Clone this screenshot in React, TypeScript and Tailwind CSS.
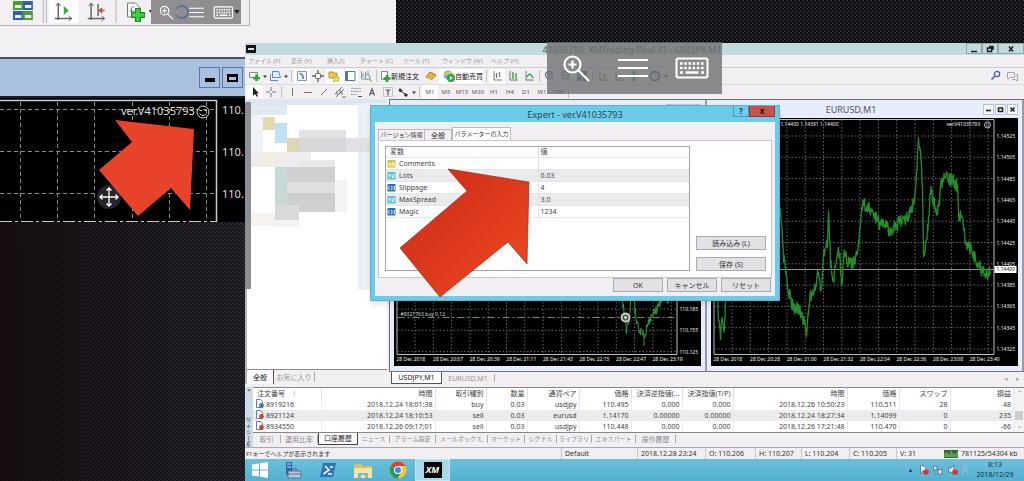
import { clsx } from "clsx";
import type { ReactNode } from "react";

const menus = [
  { label: "ファイル (F)", width: "w-[43px]" },
  { label: "表示 (V)", width: "w-[36px]" },
  { label: "挿入(I)", width: "w-[33px]" },
  { label: "チャート (C)", width: "w-[43px]" },
  { label: "ツール (T)", width: "w-[39px]" },
  { label: "ウィンドウ (W)", width: "w-[49px]" },
  { label: "ヘルプ (H)", width: "w-[40px]" },
];

const timeframes = ["M1", "M5", "M15", "M30", "H1", "H4", "D1", "W1", "MN"];

const params = [
  { name: "Comments", value: "", kind: "ab", color: "#d9c33a" },
  { name: "Lots", value: "0.03", kind: "½", color: "#5cc3d6" },
  { name: "Slippage", value: "4", kind: "123", color: "#2f6fc0" },
  { name: "MaxSpread", value: "3.0", kind: "½", color: "#5cc3d6" },
  { name: "Magic", value: "1234", kind: "123", color: "#2f6fc0" },
];

const columns = [
  { label: "注文番号", width: "w-[68px]" },
  { label: "時間", width: "w-[114px]" },
  { label: "取引種別", width: "w-[51px]" },
  { label: "数量", width: "w-[41px]" },
  { label: "通貨ペア", width: "w-[52px]" },
  { label: "価格", width: "w-[52px]" },
  { label: "決済逆指値(...", width: "w-[51px]" },
  { label: "決済指値(T/P)", width: "w-[51px]" },
  { label: "時間", width: "w-[114px]" },
  { label: "価格", width: "w-[52px]" },
  { label: "スワップ", width: "w-[51px]" },
  { label: "損益", width: "" },
];

const orders = [
  ["8919216", "2018.12.24 18:01:38", "buy", "0.03", "usdjpy", "110.495", "0.000", "0.000", "2018.12.26 10:50:23", "110.511", "28", "48"],
  ["8921124", "2018.12.24 18:10:53", "sell", "0.03", "eurusd", "1.14170", "0.00000", "0.00000", "2018.12.24 18:27:34", "1.14099", "0", "235"],
  ["8934550", "2018.12.26 09:17:01", "sell", "0.03", "usdjpy", "110.448", "0.000", "0.000", "2018.12.26 17:21:48", "110.470", "0", "-66"],
];

const terminalTabs = [
  { label: "取引", style: "w-[28px] text-[7px]" },
  { label: "運用比率", style: "w-[37px] text-[7px]" },
  { label: "口座履歴", style: "w-[40px] text-[7px]" },
  { label: "ニュース", style: "w-[32px] text-[6px]" },
  { label: "アラーム設定", style: "w-[46px] text-[6px]" },
  { label: "メールボックス", style: "w-[52px] text-[6px]" },
  { label: "マーケット", style: "w-[37px] text-[6px]" },
  { label: "シグナル", style: "w-[32px] text-[6px]" },
  { label: "ライブラリ", style: "w-[35px] text-[6px]" },
  { label: "エキスパート", style: "w-[44px] text-[6px]" },
  { label: "操作履歴", style: "w-[40px] text-[7px]" },
];

const quotes = [
  { label: "Default", width: "w-[76px]" },
  { label: "2018.12.28 23:24", width: "w-[68px]" },
  { label: "O: 110.206", width: "w-[50px]" },
  { label: "H: 110.207", width: "w-[46px]" },
  { label: "L: 110.204", width: "w-[48px]" },
  { label: "C: 110.205", width: "w-[47px]" },
  { label: "V: 31", width: "w-[48px]" },
];

type Point = [number, number];

const eurusdA: Point[] = [[6, 178], [7, 200], [9, 218], [11, 200], [13, 212], [14, 178]];
const eurusdB: Point[] = [
  [68, 90], [70, 104],
  [72, 140], [76, 168], [81, 189], [89, 192], [95, 213], [99, 178], [104, 171], [106, 156],
  [110, 172], [112, 136], [116, 124], [117, 92], [119, 146], [122, 163], [126, 130], [128, 134],
  [130, 166], [133, 132], [137, 146], [142, 145], [147, 126], [151, 86], [159, 92], [169, 106],
  [179, 112], [189, 104], [198, 98], [204, 78], [207, 20], [209, 34], [211, 66], [212, 145],
  [216, 112], [219, 72], [226, 96], [230, 66], [234, 60], [241, 62], [246, 68], [247, 96],
  [251, 98], [254, 122], [262, 138], [269, 150], [276, 158], [279, 154],
];

const usdjpyA: Point[] = [[228, 182], [230, 198], [232, 213], [235, 202], [236, 182]];
const usdjpyB: Point[] = [
  [240, 186], [242, 204], [246, 214], [250, 218], [254, 206], [258, 194], [262, 192], [265, 186], [270, 178], [274, 182], [276, 168],
];

// small repeatable jitter so the candles look ragged
function jitter(i: number) {
  const n = Math.sin(i * 12.9898) * 43758.5453;
  return n - Math.floor(n);
}

function ragged(points: Point[], amp: number) {
  const out: string[] = [];
  for (let p = 0; p < points.length - 1; p++) {
    const [x0, y0] = points[p];
    const [x1, y1] = points[p + 1];
    const steps = Math.max(2, Math.round((x1 - x0) * 2));
    for (let s = 0; s < steps; s++) {
      const t = s / steps;
      const off = (jitter(p * 31 + s) - 0.5) * amp;
      out.push(`${(x0 + (x1 - x0) * t).toFixed(1)},${(y0 + (y1 - y0) * t + off).toFixed(1)}`);
    }
  }
  const last = points[points.length - 1];
  out.push(`${last[0]},${last[1]}`);
  return out.join(" ");
}

function ChartFrame({ rows, times, firstRow, children }: {
  rows: string[];
  times: string[];
  firstRow: number;
  children: ReactNode;
}) {
  return (
    <svg viewBox="0 0 306 248" className="block w-full h-[248px] bg-black" fontFamily="Noto Sans, sans-serif">
      <g stroke="#8b8b8b" strokeWidth="1" strokeDasharray="1.5 2" opacity="0.75">
        {Array.from({ length: 15 }, (_, i) => (
          <line key={i} x1={20.5 + i * 18.3} x2={20.5 + i * 18.3} y1="2" y2="236" />
        ))}
        {rows.map((row, i) => (
          <line key={row} x1="3" x2="282" y1={firstRow + i * 21.3} y2={firstRow + i * 21.3} />
        ))}
      </g>
      <path d="M2.500 236V1.500H282.500V236.500H2.500" fill="none" stroke="#bdbdbd" />
      <g fill="#f1f1f1" fontSize="5">
        {rows.map((row, i) => (
          <text key={row} x="285" y={firstRow + 2 + i * 21.3}>{row}</text>
        ))}
        {times.map((time, i) => (
          <text key={time} x={2 + i * 36.6} y="243">{time}</text>
        ))}
      </g>
      {children}
    </svg>
  );
}

function WindowButtons() {
  return (
    <div className="flex gap-px">
      {["minimize", "maximize", "close"].map((action) => (
        <button
          key={action}
          type="button"
          aria-label={action}
          className="w-[11px] h-[11px] flex items-center justify-center border border-[#b9c1d3] bg-[#f4f6fc]"
        >
          <svg viewBox="0 0 7 7" className="w-[7px] h-[7px]" fill="none" stroke="#222" strokeWidth="1.6">
            {action === "minimize" && <path d="M1 4.500H6" />}
            {action === "maximize" && <path d="M1.500 2H5.500V5.500H1.500Z" />}
            {action === "close" && <path d="M1.500 1.500L5.500 5.500M5.500 1.500L1.500 5.500" />}
          </svg>
        </button>
      ))}
    </div>
  );
}

function ZoomIcon({ className }: { className: string }) {
  return (
    <svg viewBox="0 0 28 28" className={className} fill="none" stroke="#fff" strokeWidth="2.2">
      <circle cx="10.500" cy="10.500" r="8" />
      <path d="M16 16L27 27M6.500 10.500H14.500M10.500 6.500V14.500" />
    </svg>
  );
}

function KeyboardIcon({ className }: { className: string }) {
  return (
    <svg viewBox="0 0 34 22" className={className} fill="none" stroke="#fff">
      <rect x="1.500" y="1.500" width="31" height="19" rx="2" strokeWidth="2" />
      <path d="M5 6.500H29M5 11H29" strokeWidth="2.600" strokeDasharray="2.600 1.600" />
      <path d="M5 15.500H8M10.500 15.500H23.500M26 15.500H29" strokeWidth="2.600" />
    </svg>
  );
}

function LinesIcon({ className }: { className: string }) {
  return (
    <svg viewBox="0 0 30 20" className={className} stroke="#fff" strokeWidth="2.200">
      <path d="M0 2H30M0 10H30M0 18H30" />
    </svg>
  );
}

function Tool({ children, on, wide }: { children: ReactNode; on?: boolean; wide?: boolean }) {
  return (
    <span className={clsx("flex shrink-0 h-[15px] items-center justify-center", wide ? "w-[21px]" : "w-4", on && "bg-white")}>
      <svg viewBox={wide ? "0 0 19 12" : "0 0 12 12"} className={clsx("h-3", wide ? "w-[19px]" : "w-3")} fill="none">
        {children}
        {wide && <path d="M15 5.500H19L17 8Z" fill="#333" />}
      </svg>
    </span>
  );
}

function Divider() {
  return <span className="shrink-0 w-px h-3 mx-[2px] bg-[#c4c2c6]" />;
}

function AxisTool({ color, d, on }: { color: string; d: string; on?: boolean }) {
  return (
    <Tool on={on}>
      <path d="M3 1V10H11" stroke="#77777c" />
      <path d={d} stroke={color} strokeWidth="1.300" />
    </Tool>
  );
}

function BackWindow() {
  return (
    <div className="absolute left-0 top-0 w-[396px] h-[222px]">
      <div className="h-[57px] bg-[#f2f0f3]">
        <div className="relative flex items-center w-[250px] h-[26px] border-r border-b border-[#b5b3b7]">
          <svg viewBox="0 0 250 25" className="w-[250px] h-[25px]" fill="none">
            <rect x="49" y="0" width="30" height="23" fill="#fff" />
            <path d="M43.500 0V23M46.500 0V23M116.500 0V23" stroke="#b5b3b7" />
            <rect x="13" y="1" width="10" height="9" fill="#4f9c35" />
            <rect x="23" y="1" width="10" height="9" fill="#2f5dae" />
            <rect x="13" y="11" width="10" height="9" fill="#2f5dae" />
            <rect x="23" y="11" width="10" height="9" fill="#4f9c35" />
            <path d="M15 6.500H21.500M25 6.500H31.500M15 16.500H21.500M25 16.500H31.500" stroke="#e6efdc" strokeWidth="3" />
            <path d="M58.500 3V20M55 18.500H72M91.500 3V20M88 18.500H105" stroke="#66656a" strokeWidth="1.500" />
            <path d="M56 6L58.500 3L61 6M69 16L72 18.500L69 21M89 6L91.500 3L94 6M102 16L105 18.500L102 21" stroke="#66656a" />
            <path d="M64 6L69 10.500L64 15Z" fill="#2fae42" />
            <path d="M98.500 4V16" stroke="#66656a" strokeWidth="1.500" />
            <path d="M105 10.500H100M102.500 8L100 10.500L102.500 13" stroke="#b5482a" strokeWidth="1.500" />
            <path d="M128 3H136L140 7V17H128Z" fill="#fff" stroke="#77777c" />
            <path d="M132 14V8Q133 6 135 7M130 11H135" stroke="#77777c" />
            <path d="M138.500 8V22M131.500 15H145.500" stroke="#168b1e" strokeWidth="6" />
            <path d="M138.500 9V21M132.500 15H144.500" stroke="#3fd047" strokeWidth="3.500" />
            <path d="M149 10H154L151.500 13Z" fill="#333" />
          </svg>
          <div className="absolute left-[151px] top-0 flex items-center w-[90px] h-6 pl-2 pr-px bg-[#8f8f92]">
            <ZoomIcon className="w-[15px] h-[15px]" />
            <span className="w-[14px] h-[14px] ml-px rounded-full border-2 border-l-0 border-[#5c6f94]" />
            <LinesIcon className="w-4 h-[11px]" />
            <KeyboardIcon className="w-[21px] h-[13px] ml-[9px]" />
            <svg viewBox="0 0 6 4" className="w-[6px] h-1">
              <path d="M0 0H6L3 4Z" fill="#222" />
            </svg>
          </div>
        </div>
      </div>
      <div className="flex items-center justify-end gap-[2px] w-[245px] h-[41px] pr-[2px] border-t-2 border-b-2 border-t-[#4c4f57] border-b-[#1c1d22] bg-[#a9c0de]">
        <button type="button" aria-label="minimize" className="w-[21px] h-[21px] border border-[#5777ac] flex items-center justify-center">
          <span className="w-[10px] h-[4px] mt-1 bg-black" />
        </button>
        <button type="button" aria-label="maximize" className="w-[21px] h-[21px] border border-[#5777ac] flex items-center justify-center">
          <span className="w-[11px] h-2 border-2 border-t-[3px] border-black" />
        </button>
      </div>
      <svg viewBox="0 0 245 124" className="block w-[245px] h-[124px] bg-black" fontFamily="Noto Sans, sans-serif">
        <path
          d="M20.500 4V123M57.500 4V123M94.500 4V123M132.500 4V123M169.500 4V123M206.500 4V123M0 11.500H215M0 53.500H215M0 95.500H215"
          stroke="#8a8a8a"
          strokeDasharray="4 3"
        />
        <path d="M0 2.500H216.500V124" fill="none" stroke="#c9c9c9" strokeWidth="1.500" />
        <path d="M0 123.500H216" stroke="#c9c9c9" strokeDasharray="12 3 3 3" />
        <g fill="#dedede" fontSize="11">
          <text x="121" y="17">ver.V41035793</text>
          <text x="222" y="16">110.</text>
          <text x="222" y="58">110.</text>
          <text x="222" y="100">110.</text>
        </g>
        <g fill="none" stroke="#dedede">
          <circle cx="203" cy="14" r="6" />
          <path d="M199.500 12.500H202M204.500 12.500H207M199.500 15.500Q203 19.500 206.500 15.500" />
        </g>
        <circle cx="109" cy="99" r="12" fill="#26262a" />
        <path
          d="M109 90V108M100 99H118M106.500 92.500L109 90L111.500 92.500M106.500 105.500L109 108L111.500 105.500M102.500 96.500L100 99L102.500 101.500M115.500 96.500L118 99L115.500 101.500"
          fill="none"
          stroke="#fff"
          strokeWidth="1.300"
        />
      </svg>
    </div>
  );
}

function Toolbars() {
  return (
    <>
      <div className="flex items-center h-[17px] pl-[2px] border-t border-[#cfcdd1]">
        <Tool wide>
          <path d="M1.500 2.500H9.500V7.500H1.500Z" fill="#fff" stroke="#6a9a78" />
          <path d="M8.500 4.500V11M5 8H12" stroke="#27a534" strokeWidth="2.600" />
        </Tool>
        <Tool wide>
          <path d="M3.500 1.500H9.500L11.500 7.500H3.500Z" fill="#e3eefb" stroke="#5b87bb" />
          <path d="M1.500 4V10.500H9" stroke="#5b87bb" />
        </Tool>
        <Divider />
        <Tool on>
          <path d="M1.500 1.500H10.500V10.500H1.500Z" fill="#f5f3e8" stroke="#8097ac" />
          <path d="M4 3L7 6V9" stroke="#3a86b0" strokeWidth="1.600" />
        </Tool>
        <Tool>
          <circle cx="6" cy="6" r="3" stroke="#77777c" />
          <path d="M6 0V4M6 8V12M0 6H4M8 6H12" stroke="#66656a" strokeWidth="1.300" />
        </Tool>
        <Tool on>
          <path d="M1 2H5L6 3H9V8H1Z" fill="#e9c954" stroke="#b9942b" />
          <path d="M8 5L9.500 7.500L12 8L10 9.500L10.500 12L8 10.500L5.500 12L6 9.500L4.500 8L7 7.500Z" fill="#f4dc55" stroke="#b9942b" strokeWidth="0.600" />
        </Tool>
        <Tool on>
          <path d="M1.500 1.500H11V10.500H1.500Z" stroke="#4a78b0" fill="#fff" />
          <path d="M2.500 2V10" stroke="#4a78b0" strokeWidth="3" />
        </Tool>
        <Tool>
          <path d="M1.500 1V9H8V1M3 7V3M5.500 6V2" stroke="#7f99ad" />
          <circle cx="7.500" cy="7" r="2.500" fill="#e4eef7" stroke="#6a8fb7" />
          <path d="M9.500 9L12 11.500" stroke="#c2a23c" strokeWidth="1.500" />
        </Tool>
        <Divider />
        <button type="button" className="flex items-center w-[44px] text-[7px] leading-none whitespace-nowrap text-[#222]">
          <svg viewBox="0 0 12 12" className="w-3 h-3" fill="none">
            <path d="M2.500 1.500H8.500V9.500H2.500Z" fill="#fff" stroke="#8a8a90" />
            <path d="M8 5V12M4.500 8.500H11.500" stroke="#27a534" strokeWidth="2.600" />
          </svg>
          新規注文
        </button>
        <Tool>
          <path d="M1 7L5 2L11 5L7 10Z" fill="#e8b43e" stroke="#ab7a22" />
          <path d="M2 8L7 10.500L11 6" stroke="#fbe7a1" />
        </Tool>
        <button type="button" className="flex items-center h-[15px] w-[45px] pl-1 text-[7px] leading-none whitespace-nowrap text-[#222] bg-white">
          <svg viewBox="0 0 12 12" className="w-3 h-3" fill="none">
            <circle cx="5" cy="5" r="4.500" fill="#6cb7cf" />
            <path d="M1 5Q5 1 10 4" stroke="#eac758" strokeWidth="2" />
            <circle cx="8" cy="8" r="4" fill="#2fa43b" />
            <path d="M6.800 6V10L10 8Z" fill="#fff" />
          </svg>
          自動売買
        </button>
        <Divider />
        <AxisTool on color="#77777c" d="M5.500 3V8M8.500 2V7" />
        <AxisTool color="#27a534" d="M6 2V9M9 3V9" />
        <AxisTool color="#27a534" d="M4 7Q7 1 10 8" />
        <Divider />
        <Tool>
          <circle cx="5" cy="5" r="3.500" stroke="#4b78a8" strokeWidth="1.300" />
          <path d="M3 5H7M5 3V7M8 8L11 11" stroke="#4b78a8" />
        </Tool>
        <Tool>
          <circle cx="5" cy="5" r="3.500" stroke="#4b78a8" strokeWidth="1.300" />
          <path d="M3 5H7M8 8L11 11" stroke="#4b78a8" />
        </Tool>
        <Tool>
          <path d="M1 1H5.500V5.500H1ZM6.500 6.500H11V11H6.500Z" fill="#3d9a3a" />
          <path d="M6.500 1H11V5.500H6.500ZM1 6.500H5.500V11H1Z" fill="#3767b8" />
        </Tool>
        <Divider />
        <AxisTool color="#27a534" d="M6 4L9 6L6 8" />
        <AxisTool color="#b5482a" d="M10 6H6M8 4L6 6L8 8" />
        <Tool wide>
          <path d="M6 1V11M1 6H11" stroke="#27a534" strokeWidth="3" />
        </Tool>
        <Tool wide>
          <circle cx="6" cy="6" r="4.500" fill="#dfe9f6" stroke="#3d5f92" strokeWidth="1.800" />
          <path d="M6 3V6H8.500" stroke="#3d5f92" />
        </Tool>
        <div className="ml-auto mr-1 flex items-center">
          <Tool>
            <circle cx="7" cy="4" r="2.600" stroke="#4a62a8" strokeWidth="1.300" />
            <path d="M5 6L1.500 9.500" stroke="#4a62a8" strokeWidth="1.600" />
          </Tool>
          <Tool>
            <path d="M1.500 2.500H8.500V7.500H4L2 9.500V7.500H1.500ZM10 4.500H11.500V9L11 11L9 9.500H6" stroke="#a5a5ab" />
          </Tool>
        </div>
      </div>
      <div className="flex items-center h-[15px] pl-[2px] border-t border-[#dedce0] text-[6px] text-[#555]">
        <Tool on>
          <path d="M4 1V10L6 8L8 11L9 10L7.500 7.500H10Z" fill="#222" />
        </Tool>
        <Tool>
          <path d="M6 1V5M6 7V11M1 6H5M7 6H11" stroke="#777" />
        </Tool>
        <Divider />
        <Tool><path d="M6.500 2V10" stroke="#777" /></Tool>
        <Tool><path d="M2 6.500H10" stroke="#777" /></Tool>
        <Tool><path d="M3 9L9 3" stroke="#777" /></Tool>
        <Tool>
          <path d="M1 8L8 1M2 11L10 3M3 5V9M6 3V8M8 5V9M8 11H12" stroke="#777" />
        </Tool>
        <Tool>
          <path d="M1 2.500H11M1 5.500H11M1 8.500H7" stroke="#999" strokeDasharray="1.500 0.600" />
          <path d="M8 10.500H12" stroke="#555" />
        </Tool>
        <Tool><path d="M3.500 9.500L6 3L8.500 9.500M4.500 7.500H7.500" stroke="#555" strokeWidth="1.200" /></Tool>
        <Tool>
          <path d="M1.500 1.500H10.500V10.500H1.500Z" stroke="#999" strokeDasharray="1 1" />
          <path d="M3.500 4H8.500M6 4V9.500" stroke="#555" strokeWidth="1.200" />
        </Tool>
        <Tool wide>
          <path d="M3 2L6 5L3 6.500L1.500 4ZM8 7L11 8.500L9.500 11L7 9.500Z" fill="#333" />
          <path d="M5 6L8 8" stroke="#333" />
        </Tool>
        <Divider />
        {timeframes.map((frame) => (
          <button
            key={frame}
            type="button"
            className={clsx("w-4 h-[14px] shrink-0 leading-none", frame === "M1" && "bg-white")}
          >
            {frame}
          </button>
        ))}
        <Divider />
      </div>
    </>
  );
}

function Navigator() {
  return (
    <aside className="flex flex-col w-[142px] shrink-0 bg-white border-l-2 border-[#b3b3ba]">
      <div className="flex-1">
        <svg viewBox="0 0 142 192" className="w-[142px] h-[192px] -ml-[2px]">
          <rect x="0" y="0" width="142" height="6" fill="#dbe6f1" />
          <rect x="6" y="6" width="36" height="10" fill="#e2eaf4" />
          <rect x="113" y="4" width="29" height="187" fill="#e9f0f8" />
          <rect x="6" y="16" width="12" height="37" fill="#eff3f7" />
          <rect x="18" y="18" width="12" height="13" fill="#e0daae" />
          <rect x="30" y="24" width="12" height="20" fill="#bfe3f4" />
          <rect x="54" y="31" width="47" height="9" fill="#e3e3e5" />
          <rect x="42" y="39" width="12" height="14" fill="#ded6b4" />
          <rect x="54" y="39" width="47" height="14" fill="#d8d8db" />
          <rect x="101" y="39" width="24" height="14" fill="#e0e1e6" />
          <rect x="6" y="53" width="60" height="15" fill="#eeecec" />
          <rect x="18" y="53" width="12" height="12" fill="#f4efdc" />
          <rect x="54" y="61" width="36" height="7" fill="#e9e8e9" />
          <rect x="30" y="68" width="12" height="38" fill="#c6d9d7" />
          <rect x="42" y="68" width="48" height="15" fill="#d0d0d2" />
          <rect x="42" y="83" width="48" height="11" fill="#dfdfe0" />
          <rect x="42" y="94" width="48" height="19" fill="#cecfd0" />
          <rect x="90" y="81" width="12" height="32" fill="#f4f4f5" />
          <rect x="30" y="106" width="24" height="15" fill="#dadada" />
          <rect x="6" y="114" width="24" height="13" fill="#f7f2ee" />
          <rect x="30" y="121" width="24" height="7" fill="#f3f3f3" />
          <rect x="0" y="3" width="6" height="187" fill="#8d8d94" />
        </svg>
      </div>
      <div className="flex h-[15px] bg-[#f1eff2] border-t border-[#8d8b90] text-[7px] leading-none">
        <button type="button" className="w-[27px] bg-white border-r border-[#555] text-[#222]">全般</button>
        <button type="button" className="w-[41px] my-[2px] border-r border-[#aaa] text-[#999]">お気に入り</button>
      </div>
    </aside>
  );
}

function Charts() {
  return (
    <div className="flex flex-1 flex-col min-w-0 bg-[#f1eff2]">
      <div className="flex flex-1 min-h-0 border-t border-l border-[#6c6c74]">
        <section aria-label="USDJPY,M1" className="flex-1 flex flex-col px-1 pb-1 bg-[#e7ecfb] border-r-2 border-[#9a9aa6]">
          <div className="flex h-[18px] items-center justify-end">
            <WindowButtons />
          </div>
          <ChartFrame
            rows={["110.185", "110.155", "110.125"]}
            times={["28 Dec 2018", "28 Dec 20:07", "28 Dec 20:39", "28 Dec 21:11", "28 Dec 21:43", "28 Dec 22:15", "28 Dec 22:47", "28 Dec 23:19"]}
            firstRow={191}
          >
            <path d="M3 199.500H282" stroke="#6f8f78" strokeDasharray="7 3 2 3" />
            <text x="6" y="198" fontSize="5" fill="#ddd">#9321763 buy 0.12</text>
            <g fill="none" stroke="#2f9e38">
              <polyline points={ragged(usdjpyA, 9)} />
              <polyline points={ragged(usdjpyB, 9)} />
            </g>
            <path d="M249.500 216V228" stroke="#2f9e38" />
            <circle cx="231" cy="199.500" r="4" fill="#4b5a50" stroke="#c9d6cc" strokeWidth="1.800" />
            <circle cx="231" cy="199.500" r="1.300" fill="#fff" />
          </ChartFrame>
        </section>
        <section className="flex-1 flex flex-col px-1 pb-1 bg-[#e7ecfb] border-r-2 border-[#9a9aa6]">
          <div className="flex h-[18px] items-center">
            <h2 className="flex-1 pl-2 text-center text-[9px] leading-none text-[#555]">EURUSD,M1</h2>
            <WindowButtons />
          </div>
          <ChartFrame
            rows={["1.14525", "1.14505", "1.14485", "1.14465", "1.14445", "1.14425", "1.14405", "1.14385", "1.14365", "1.14345", "1.14325"]}
            times={["28 Dec 2018", "28 Dec 20:28", "28 Dec 21:00", "28 Dec 21:32", "28 Dec 22:04", "28 Dec 22:36", "28 Dec 23:08", "28 Dec 23:40"]}
            firstRow={18}
          >
            <path d="M3 151.500H282" stroke="#8f959c" />
            <g fill="none" stroke="#238f2a" strokeWidth="1.300" strokeLinejoin="round">
              <polyline points={ragged(eurusdA, 12)} />
              <polyline points={ragged(eurusdB, 14)} />
            </g>
            <rect x="283" y="148" width="22" height="7" fill="#fff" />
            <g fontSize="5" fill="#f1f1f1">
              <text x="285" y="153" fill="#222">1.14400</text>
              <text x="127" y="8" textAnchor="end">1.14400 1.14391 1.14400</text>
              <text x="235" y="8">ver.V41035793</text>
            </g>
            <circle cx="276" cy="7" r="3" fill="none" stroke="#f1f1f1" strokeWidth="0.800" />
            <path d="M274.500 6H275.500M276.500 6H277.500M274.500 8H277.500" stroke="#f1f1f1" strokeWidth="0.700" />
          </ChartFrame>
        </section>
      </div>
      <div className="flex h-[13px] border-t border-[#77757a] pl-[2px] pr-1 text-[7px] leading-none">
        <button type="button" className="w-[51px] bg-white border border-t-0 border-[#555] text-[#222]">USDJPY,M1</button>
        <button type="button" className="w-[53px] my-[2px] border-r border-[#aaa] text-[#999]">EURUSD,M1</button>
        <span className="ml-auto flex gap-2 items-center text-[#aaa]">
          <span>◂</span>
          <span>▸</span>
        </span>
      </div>
    </div>
  );
}

function OrderIcon({ sell }: { sell: boolean }) {
  return (
    <svg viewBox="0 0 9 9" className="inline-block w-[9px] h-[9px] mr-[2px] align-top" fill="none">
      <path d="M1.500 0.500H5.500L7.500 2.500V8.500H1.500Z" fill="#fff" stroke="#5f7fa6" />
      <circle cx="6.500" cy="6.500" r="2.400" fill={sell ? "#d0402c" : "#3c77bf"} />
    </svg>
  );
}

function Terminal() {
  return (
    <div className="flex pt-[3px] h-[63px] bg-[#f1eff2]">
      <div className="flex flex-col items-center justify-between w-2 shrink-0 bg-[#cfdbe8] text-[6px] leading-none text-[#444]">
        <button type="button" aria-label="close terminal" className="font-bold leading-none">×</button>
        <span className="[writing-mode:vertical-rl] rotate-180">ターミナル</span>
      </div>
      <div className="flex-1 min-w-0">
        <div className="flex border-t border-b border-[#88868b] bg-white">
          <table className="flex-1 w-full table-fixed border-collapse text-[7px] leading-[11px] text-[#444]">
            <thead>
              <tr>
                {columns.map((col, i) => (
                  <th
                    key={i}
                    scope="col"
                    className={clsx(
                      "h-[11px] p-0 px-[2px] font-normal whitespace-nowrap overflow-hidden border-r border-[#e1e0e3]",
                      col.width,
                      i === 0 ? "text-left pl-1" : "text-right",
                    )}
                  >
                    {col.label}
                    {i === 0 && <span className="pl-2 text-[#aaa]">/</span>}
                  </th>
                ))}
              </tr>
            </thead>
            <tbody>
              {orders.map((order, r) => (
                <tr key={order[0]} className={r === 1 ? "bg-[#ececee]" : "bg-white"}>
                  {order.map((cell, i) => (
                    <td
                      key={i}
                      className={clsx(
                        "h-[11px] p-0 px-[2px] whitespace-nowrap border-r border-[#ebeaed]",
                        i === 0 ? "text-left" : "text-right",
                      )}
                    >
                      {i === 0 && <OrderIcon sell={r > 0} />}
                      {cell}
                    </td>
                  ))}
                </tr>
              ))}
            </tbody>
          </table>
          <div className="flex flex-col justify-between items-center w-[10px] shrink-0 bg-[#f3f3f4] text-[6px] leading-[11px] text-[#777]">
            <span>⌃</span>
            <span className="w-2 h-[9px] mt-[10px] bg-[#cdcdcf]" />
            <span>⌄</span>
          </div>
        </div>
        <div role="tablist" className="flex h-3 leading-none text-[#8d8b90]">
          {terminalTabs.map((tab) => (
            <button
              key={tab.label}
              type="button"
              role="tab"
              className={clsx(
                "shrink-0 whitespace-nowrap border-r",
                tab.style,
                tab.label === "口座履歴" ? "bg-white border border-t-0 border-[#444] text-[#222]" : "my-[2px] border-[#aaa]",
              )}
            >
              {tab.label}
              {tab.label === "メールボックス" && <sub className="text-[#c03]">,</sub>}
            </button>
          ))}
        </div>
      </div>
    </div>
  );
}

function StatusBar() {
  return (
    <footer className="flex items-center h-[12px] border-t border-[#aaa8ad] bg-[#f1eff2] text-[7px] leading-none whitespace-nowrap text-[#333]">
      <span className="flex-1 pl-px text-[6px]">F1キーでヘルプが表示されます</span>
      {quotes.map((quote) => (
        <span key={quote.label} className={clsx("py-[2px] pl-[3px] border-l border-[#c9c7cb]", quote.width)}>
          {quote.label}
        </span>
      ))}
      <span className="flex items-center gap-[3px] w-[80px]">
        <svg viewBox="0 0 14 8" className="w-[14px] h-2">
          <rect width="14" height="8" fill="#2c6b33" />
          <path d="M1 7V3M3 7V2M5 7V4M7 7V1M9 7V3M11 7V4M13 7V2" stroke="#8fcf72" />
        </svg>
        781125/54304 kb
      </span>
    </footer>
  );
}

function Taskbar() {
  return (
    <div className="flex h-[22px] pr-[10px] bg-gradient-to-b from-[#6bbfdb] to-[#54b0d0]">
      <button type="button" aria-label="Start" className="w-[30px] flex items-center justify-center">
        <svg viewBox="0 0 16 16" className="w-4 h-4" fill="#fff">
          <path d="M0 2.500L7 1.500V7.500H0ZM8 1.300L16 0V7.500H8ZM0 8.500H7V14.500L0 13.500ZM8 8.500H16V16L8 14.700Z" />
        </svg>
      </button>
      <button type="button" aria-label="Server Manager" className="w-[35px] flex items-center justify-center">
        <svg viewBox="0 0 18 18" className="w-[18px] h-[18px]">
          <path d="M2 1H8V14H2Z" fill="#2a66ad" />
          <path d="M3 3H7M3 6H7" stroke="#d7e7f7" />
          <path d="M4 10H17V17H4Z" fill="#b9c8d6" stroke="#56738f" />
          <path d="M8 10V8H13V10M4 13H17" fill="none" stroke="#56738f" />
        </svg>
      </button>
      <button type="button" aria-label="PowerShell" className="w-[35px] flex items-center justify-center">
        <svg viewBox="0 0 18 16" className="w-[18px] h-4" fill="none">
          <path d="M4 1H17L14 15H1Z" fill="#2b73bd" />
          <path d="M6 4L10 8L4.500 12M9 12H13M11 5H14" stroke="#fff" strokeWidth="1.600" />
        </svg>
      </button>
      <button type="button" aria-label="File Explorer" className="w-[35px] flex items-center justify-center">
        <svg viewBox="0 0 20 17" className="w-5 h-[17px]">
          <path d="M1 2H8L10 4H19V15H1Z" fill="#e3bd5a" />
          <path d="M1 6H19V16H1Z" fill="#f8e5a0" />
          <path d="M5 16V11H15V16H12V13H8V16Z" fill="#79b7dc" />
        </svg>
      </button>
      <button type="button" aria-label="Chrome" className="w-[35px] flex items-center justify-center">
        <svg viewBox="0 0 18 18" className="w-[18px] h-[18px]">
          <circle cx="9" cy="9" r="8.500" fill="#f5c92f" />
          <path d="M9 9L1.600 4.800A8.500 8.500 0 0 1 16.500 5H9Z" fill="#dc4437" />
          <path d="M9 9L1.600 4.800A8.500 8.500 0 0 0 8.500 17.500L12.400 11Z" fill="#2e9c58" />
          <circle cx="9" cy="9" r="4" fill="#fff" />
          <circle cx="9" cy="9" r="3" fill="#4485ef" />
        </svg>
      </button>
      <button type="button" className="w-[35px] flex items-center justify-center border border-[#c2e6f2] bg-[#a5d8ea]">
        <span className="w-[18px] h-4 bg-black text-white text-[9px] leading-4 font-bold italic">XM</span>
      </button>
      <div className="ml-auto flex items-center gap-[3px]">
        <span className="text-[6px] leading-none text-[#123] pr-1">▴</span>
        <svg viewBox="0 0 54 12" className="w-[54px] h-3" fill="none">
          <path d="M1.500 10V1.500H4L7 3.500V8L3 7" fill="#e8eef4" stroke="#66788a" />
          <circle cx="7" cy="8" r="2.800" fill="#cf3a35" />
          <path d="M14.500 2H18V6H14.500ZM19 5.500H23V10H19ZM16 6V10H18" fill="#d8e6ee" stroke="#5f7d92" />
          <path d="M29.500 4H32L35 1.500V10.500L32 8H29.500Z" fill="#e8eef4" stroke="#66788a" />
          <circle cx="36" cy="8" r="2.800" fill="#cf3a35" />
          <path d="M46 1L43 10M46 1L49 10M44 7H48" stroke="#a3bcc9" />
        </svg>
        <time className="flex flex-col items-center gap-[2px] w-[38px] text-[7px] leading-[8px] text-[#16313f]">
          <span>8:13</span>
          <span>2018/12/29</span>
        </time>
      </div>
    </div>
  );
}

function MainWindow() {
  return (
    <div className="absolute left-[245px] right-0 top-[43px] bottom-0 flex flex-col bg-[#f1eff2]">
      <header className="relative flex items-center h-3 bg-[#c2d9dd]">
        <span className="ml-px w-[10px] h-2 bg-[#16161a] flex items-center justify-center">
          <span className="w-[6px] h-[2px] bg-[#ddd]" />
        </span>
        <h1 className="flex-1 pr-4 text-center text-[9px] leading-none text-[#4c565a]">
          41035793: XMTrading-Real 31 - USDJPY,M1
        </h1>
        <div className="absolute right-0 top-0 flex h-[11px]">
          {[
            { name: "minimize", width: "w-4", d: "M1 6.500H7" },
            { name: "restore", width: "w-4", d: "M1.500 3H5.500V6.500H1.500ZM3 1.500H7V5" },
            { name: "close", width: "w-[26px]", d: "M2 1.500L6 6.500M6 1.500L2 6.500" },
          ].map((btn) => (
            <button
              key={btn.name}
              type="button"
              aria-label={btn.name}
              className={clsx("flex items-center justify-center border border-[#8fa9b0]", btn.width)}
            >
              <svg viewBox="0 0 8 8" className="w-2 h-2" fill="none" stroke="#222" strokeWidth="1.500">
                <path d={btn.d} />
              </svg>
            </button>
          ))}
        </div>
      </header>
      <nav className="flex items-center h-3 pl-[3px] text-[6px] leading-none text-[#9c9aa0]">
        {menus.map((menu) => (
          <button key={menu.label} type="button" className={clsx("shrink-0 text-left whitespace-nowrap", menu.width)}>
            {menu.label}
          </button>
        ))}
      </nav>
      <Toolbars />
      <div className="flex flex-1 gap-[2px] min-h-0">
        <Navigator />
        <Charts />
      </div>
      <Terminal />
      <StatusBar />
      <Taskbar />
    </div>
  );
}

function DialogButton({ label, width }: { label: string; width: string }) {
  return (
    <button
      type="button"
      className={clsx("h-[14px] border border-[#acaab0] bg-[#e2e1e4] text-[7px] leading-none text-[#333]", width)}
    >
      {label}
    </button>
  );
}

function ExpertDialog() {
  return (
    <div
      role="dialog"
      aria-label="Expert - ver.V41035793"
      className="absolute left-[370px] top-[105px] w-[410px] flex flex-col px-1 pb-1 bg-[#6bcbe8] border border-[#5ab3cf] shadow-md"
    >
      <div className="relative flex items-center justify-center h-4">
        <h2 className="text-[9px] leading-none text-[#274955]">Expert - ver.V41035793</h2>
        <div className="absolute right-0 top-0 flex h-[11px] text-[8px] leading-none font-bold">
          <button type="button" className="w-4 border border-[#4a9bb6] border-t-0 text-[#123a6a] leading-none">?</button>
          <button type="button" className="w-[26px] bg-[#c7524d] border border-[#8f3936] border-t-0 text-[#2c0e0d] leading-none">x</button>
        </div>
      </div>
      <div className="bg-[#f1eff2] px-[3px] pt-[5px] pb-1">
        <div role="tablist" className="flex items-end text-[7px] leading-none text-[#333]">
          <button type="button" role="tab" className="w-[47px] h-[11px] border border-b-0 border-[#bbb9be] text-[6px]">バージョン情報</button>
          <button type="button" role="tab" className="w-[27px] h-[11px] border border-b-0 border-l-0 border-[#bbb9be]">全般</button>
          <button type="button" role="tab" aria-selected className="w-[59px] h-[13px] border border-b-0 border-[#bbb9be] bg-white text-[6px]">パラメーターの入力</button>
        </div>
        <div className="flex gap-[6px] h-[138px] pl-[6px] pr-[5px] pt-[5px] pb-[6px] bg-white border border-[#c9c7cc]">
          <div className="flex-1 border border-[#a5a3a8]">
            <table className="w-full table-fixed border-collapse text-[7px] leading-[10px] text-[#444]">
              <thead>
                <tr className="border-b border-[#e6e5e8]">
                  <th scope="col" className="w-[152px] p-0 pl-1 text-left font-normal border-r border-[#e0dfe2]">変数</th>
                  <th scope="col" className="p-0 pl-[2px] text-left font-normal">値</th>
                </tr>
              </thead>
              <tbody>
                {params.map((param, i) => (
                  <tr key={param.name} className={clsx("border-b border-[#e6e5e8]", i % 2 === 1 && "bg-[#ebebed]")}>
                    <td className="p-0 pl-px border-r border-[#e0dfe2]">
                      <span className="flex items-center h-[11px] gap-[3px]">
                        <svg viewBox="0 0 9 9" className="w-[9px] h-[9px]">
                          <rect x="0.500" y="1" width="8" height="7.500" fill={param.color} />
                          <path
                            d={param.kind === "ab" ? "M2 4H4V6.500H2ZM5.500 2.500V6.500H7.500V4.500H5.500" : param.kind === "123" ? "M2 3V7M4 3.500H5V6.500H4M6.500 3.500H7.500V6.500H6.500" : "M2 3L3 5L4 3M3 5V7M5.500 3.500H7V5H5.500V6.500H7.500"}
                            fill="none"
                            stroke="#fff"
                            strokeWidth="0.800"
                          />
                        </svg>
                        {param.name}
                      </span>
                    </td>
                    <td className="p-0 pl-[2px]">{param.value}</td>
                  </tr>
                ))}
              </tbody>
            </table>
          </div>
          <div className="flex flex-col justify-end gap-[7px]">
            <DialogButton label="読み込み (L)" width="w-[70px]" />
            <DialogButton label="保存 (S)" width="w-[70px]" />
          </div>
        </div>
        <div className="flex justify-end gap-1 pr-px">
          <DialogButton label="OK" width="w-[50px]" />
          <DialogButton label="キャンセル" width="w-[50px]" />
          <DialogButton label="リセット" width="w-[50px]" />
        </div>
      </div>
    </div>
  );
}

export default function App() {
  return (
    <main className="relative min-h-screen w-full overflow-hidden font-['Noto_Sans','Noto_Sans_CJK_JP',sans-serif] bg-[#34343b] bg-[radial-gradient(circle_at_1px_1px,#09090c_1px,transparent_2px),radial-gradient(circle_at_3px_3px,#09090c_1px,transparent_2px)] bg-[length:4px_4px]">
      <div className="absolute left-0 top-0 bottom-0 w-[245px] bg-gradient-to-r from-[#150c10]/90 to-[#2a2a36]/40" />
      <BackWindow />
      <MainWindow />
      <ExpertDialog />

      {/* remote desktop controls */}
      <div className="absolute left-[547px] top-[42px] flex items-center justify-between w-[175px] h-[52px] pl-[15px] pr-[13px] bg-[#707072]/80">
        <ZoomIcon className="w-7 h-7" />
        <LinesIcon className="w-[30px] h-5" />
        <KeyboardIcon className="w-[34px] h-[22px]" />
      </div>

      {/* callout arrows */}
      <svg viewBox="0 0 1024 481" className="absolute left-0 top-0 w-[1024px] h-[481px] pointer-events-none">
        <defs>
          <linearGradient id="arrow" x1="0" y1="0" x2="1" y2="1">
            <stop offset="0" stopColor="#c92a1a" />
            <stop offset="1" stopColor="#f04a20" />
          </linearGradient>
        </defs>
        <path d="M448 169L529 182L527 264L508 242L440 297L400 248L467 191Z" fill="url(#arrow)" stroke="#7d2216" strokeWidth="0.600" />
        <path d="M115 120L194 129L190 210L171 188L138 216L99 170L132 142Z" fill="#e6432a" />
      </svg>
    </main>
  );
}
